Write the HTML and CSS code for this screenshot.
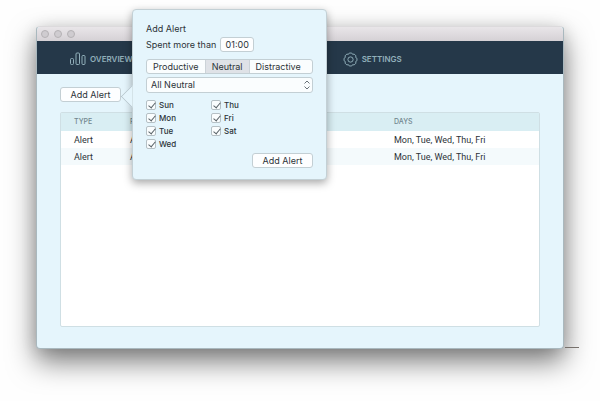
FILE: index.html
```html
<!DOCTYPE html>
<html lang="en">
<head>
  <meta charset="utf-8">
  <title>Alerts</title>
  <link rel="stylesheet" href="styles.css">
</head>
<body>
<div class="window">

  <div class="titlebar">
    <span class="dot"></span>
    <span class="dot"></span>
    <span class="dot"></span>
  </div>

  <nav class="menu">
    <a class="menu-item" href="#overview">
      <svg width="16" height="14" viewBox="0 0 16 14" fill="none" stroke="currentColor">
        <rect x="0.5" y="6.5" width="3" height="6" rx="1"/>
        <rect x="6" y="1" width="3.5" height="11.5" rx="1"/>
        <rect x="12" y="3.5" width="3" height="9" rx="1"/>
      </svg>
      <span>OVERVIEW</span>
    </a>
    <a class="menu-item settings" href="#settings">
      <svg width="15" height="15" viewBox="0 0 16 16" fill="none" stroke="currentColor" stroke-linejoin="round">
        <path d="M14.900 6.700V9.300Q12.600 9.900 13.800 11.900L11.900 13.800Q9.900 12.600 9.300 14.900H6.700Q6.100 12.600 4.100 13.800L2.200 11.900Q3.400 9.900 1.100 9.300V6.700Q3.400 6.100 2.200 4.100L4.100 2.200Q6.100 3.400 6.700 1.100H9.300Q9.900 3.400 11.900 2.200L13.800 4.100Q12.600 6.100 14.900 6.700Z"/>
        <circle cx="8" cy="8" r="2.800"/>
      </svg>
      <span>SETTINGS</span>
    </a>
  </nav>

  <main class="content">
    <div class="toolbar">
      <button class="btn" type="button">Add Alert</button>

      <form class="popover">
        <h1 class="popover-title">Add Alert</h1>
        <div class="spent">
          <label for="spent">Spent more than</label>
          <input class="time" id="spent" type="text" value="01:00">
        </div>
        <div class="segments">
          <button class="segment" type="button">Productive</button>
          <button class="segment selected" type="button">Neutral</button>
          <button class="segment" type="button">Distractive</button>
        </div>
        <div class="select-wrap">
          <select class="select" aria-label="Activity">
            <option>All Neutral</option>
          </select>
          <svg class="arrows" width="6" height="10" viewBox="0 0 6 10" fill="none" stroke="currentColor">
            <path d="M.5 3.500L3 1l2.500 2.500M.5 6.500L3 9l2.500-2.500"/>
          </svg>
        </div>
        <div class="days">
          <label class="day"><input type="checkbox" checked>Sun</label>
          <label class="day"><input type="checkbox" checked>Mon</label>
          <label class="day"><input type="checkbox" checked>Tue</label>
          <label class="day"><input type="checkbox" checked>Wed</label>
          <label class="day"><input type="checkbox" checked>Thu</label>
          <label class="day"><input type="checkbox" checked>Fri</label>
          <label class="day"><input type="checkbox" checked>Sat</label>
        </div>
        <button class="btn submit" type="button">Add Alert</button>
      </form>
    </div>

    <div class="list">
      <table class="alerts">
        <thead>
          <tr><th class="col-type">TYPE</th><th class="col-for">P</th><th>DAYS</th></tr>
        </thead>
        <tbody>
          <tr><td>Alert</td><td>All</td><td>Mon, Tue, Wed, Thu, Fri</td></tr>
          <tr><td>Alert</td><td>All</td><td>Mon, Tue, Wed, Thu, Fri</td></tr>
        </tbody>
      </table>
    </div>
  </main>
</div>
</body>
</html>
```

FILE: styles.css
```css
* {
  box-sizing: border-box;
}
body {
  display: flex;
  min-height: 100vh;
  margin: 0;
  padding: 26px 36px 52px;
  background: #fefefe;
  color: #2c3338;
  font: 9px/12px Inter, "Liberation Sans", sans-serif;
}
button, input, select {
  margin: 0;
  font: inherit;
  color: inherit;
}

.window {
  position: relative;
  flex: 1;
  display: flex;
  flex-direction: column;
  border: 1px solid #a9b8be;
  border-top-color: #dcdadc;
  border-radius: 4px;
  background: #e5f5fc;
  box-shadow: 0 13px 28px rgba(0, 0, 0, 0.5), 0 2px 16px rgba(0, 0, 0, 0.12);
}
/* resize handle */
.window::after {
  content: "";
  position: absolute;
  right: -16px;
  bottom: 0;
  width: 14px;
  height: 1px;
  background: #77716c;
}

.titlebar {
  display: flex;
  align-items: center;
  gap: 5px;
  height: 14px;
  padding-left: 4px;
  border-radius: 4px 4px 0 0;
  background: linear-gradient(#e9e6e9, #d5d1d5);
}
.dot {
  width: 8px;
  height: 8px;
  border: 1px solid #b5b2b5;
  border-radius: 50%;
  background: #cfccd0;
}

.menu {
  display: flex;
  align-items: center;
  height: 33px;
  padding: 3px 33px 0;
  background: #253849;
}
.menu-item {
  display: flex;
  align-items: center;
  gap: 4px;
  color: #91afba;
  font-size: 8px;
  font-weight: 600;
  text-decoration: none;
}
.settings {
  margin-left: 210px;
}

.content {
  flex: 1;
  display: flex;
  flex-direction: column;
  gap: 10px;
  padding: 13px 23px 21px;
}
.toolbar {
  position: relative;
  display: flex;
}
.btn {
  width: 61px;
  height: 15px;
  padding: 0;
  border: 1px solid #c3cfd4;
  border-radius: 3px;
  background: #fdfeff;
  line-height: 12px;
}

.list {
  flex: 1;
  border: 1px solid #cfdfe4;
  border-radius: 2px;
  background: #fff;
}
.alerts {
  width: 100%;
  border-collapse: collapse;
  table-layout: fixed;
  font-family: Roboto, "Liberation Sans", sans-serif;
}
.alerts th, .alerts td {
  height: 17px;
  padding: 0 0 0 13px;
  text-align: left;
}
.alerts th {
  height: 18px;
  background: #d9eef3;
  color: #71868e;
  font-family: Inter, "Liberation Sans", sans-serif;
  font-size: 7px;
  font-weight: 500;
}
.alerts tbody tr:nth-child(even) {
  background: #f4fafc;
}
.alerts .col-type {
  width: 56px;
}
.alerts .col-for {
  width: 264px;
}

.popover {
  position: absolute;
  top: -78px;
  left: 72px;
  display: flex;
  flex-direction: column;
  width: 195px;
  height: 171px;
  padding: 13px 13px 11px;
  border: 1px solid #c3d0d5;
  border-radius: 4px;
  background: #e5f5fc;
  box-shadow: 0 3px 8px rgba(0, 0, 0, 0.35);
}
.popover::before {
  content: "";
  position: absolute;
  top: 78px;
  left: -9px;
  width: 16px;
  height: 16px;
  border: 1px solid #b8c7cd;
  border-width: 0 0 1px 1px;
  background: #e5f5fc;
  clip-path: polygon(0 0, 100% 100%, 0 100%);
  transform: rotate(45deg);
}
.popover-title {
  margin: 0 0 2px;
  font: inherit;
}
.spent {
  display: flex;
  align-items: center;
  gap: 4px;
}
.time {
  width: 34px;
  height: 15px;
  padding: 0;
  border: 1px solid #c3cfd4;
  border-radius: 3px;
  background: #fdfeff;
  text-align: center;
}
.segments {
  display: flex;
  height: 15px;
  margin-top: 7px;
  border: 1px solid #c3cfd4;
  border-radius: 3px;
  background: #fafdfe;
}
.segment {
  padding: 0 6px;
  border: 0;
  background: none;
}
.selected {
  border: solid #ccd3d8;
  border-width: 0 1px;
  background: #dfe2e7;
}
.select-wrap {
  position: relative;
  margin-top: 3px;
}
.select {
  display: block;
  width: 100%;
  height: 16px;
  padding: 0 4px;
  border: 1px solid #c3cfd4;
  border-radius: 3px;
  background: #fafdfe;
  appearance: none;
}
.arrows {
  position: absolute;
  top: 3px;
  right: 3px;
  color: #687178;
  pointer-events: none;
}
.days {
  display: grid;
  grid-template: repeat(4, 13px) / 65px 65px;
  grid-auto-flow: column;
  margin-top: 5px;
}
.day {
  display: flex;
  align-items: center;
  gap: 3px;
  font-size: 8px;
  font-weight: 500;
}
.day input {
  width: 10px;
  height: 10px;
  border: 1px solid #b5c0c5;
  border-radius: 2px;
  background: #fafdfe;
  appearance: none;
}
.day input:checked::before {
  content: "";
  display: block;
  width: 3px;
  height: 6px;
  margin: 0 3px;
  border: solid #596268;
  border-width: 0 1px 1px 0;
  transform: rotate(40deg);
}
.submit {
  align-self: flex-end;
  margin-top: auto;
}
```
